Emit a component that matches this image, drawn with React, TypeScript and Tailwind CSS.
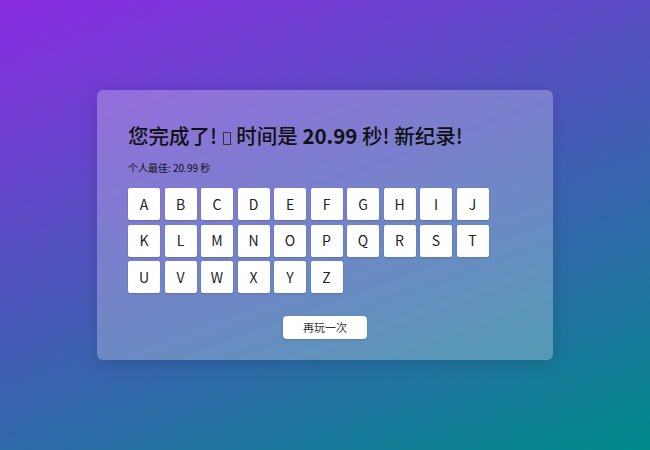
import React from "react";

const letters = "ABCDEFGHIJKLMNOPQRSTUVWXYZ".split("");

export default function App() {
  return (
    <div
      className="w-[650px] h-[450px] flex items-center justify-center bg-[linear-gradient(160deg,#8a2be2,#008b8b)]"
      style={{ fontFamily: '"Noto Sans CJK SC", "Noto Sans", sans-serif' }}
    >
      <div className="w-[456px] rounded-md bg-white/25 shadow-[0_4px_16px_rgba(0,0,0,0.15)] pl-[31px] pr-[31px] pt-[29px] pb-[21px] flex flex-col">
        <h1 className="text-[20.5px] leading-[32px] font-medium text-[#111] whitespace-nowrap">
          您完成了!{" "}
          <span
            aria-label="🎉"
            className="inline-block w-[8px] h-[13px] border border-[#333] align-[-1px] mx-[1px]"
          ></span>{" "}
          时间是 <span className="font-bold">20.99</span> 秒! 新纪录!
        </h1>
        <p className="mt-[10px] text-[10px] leading-[14.5px] text-[#111]">个人最佳: 20.99 秒</p>
        <div className="mt-[12.5px] grid grid-cols-[repeat(10,32px)] gap-[4.5px]">
          {letters.map((l) => (
            <div
              key={l}
              className="w-8 h-8 bg-white rounded-[2px] shadow-[0_1px_2px_rgba(0,0,0,0.15)] flex items-center justify-center text-[14px] text-[#222]"
            >
              {l}
            </div>
          ))}
        </div>
        <div className="mt-[23px] flex justify-center">
          <button className="w-[84px] h-[23px] bg-white rounded-[4px] text-[11px] text-[#333] flex items-center justify-center shadow-[0_1px_2px_rgba(0,0,0,0.1)]">
            再玩一次
          </button>
        </div>
      </div>
    </div>
  );
}
